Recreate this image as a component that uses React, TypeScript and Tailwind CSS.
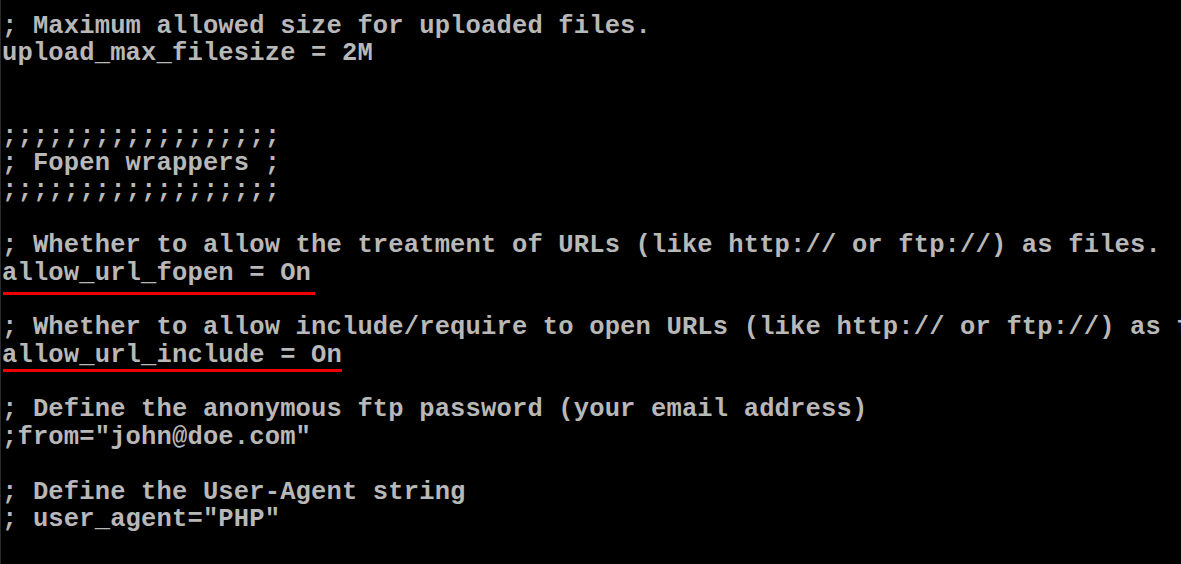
const lines = [
  '; Maximum allowed size for uploaded files.',
  'upload_max_filesize = 2M',
  '',
  '',
  ';;;;;;;;;;;;;;;;;;',
  '; Fopen wrappers ;',
  ';;;;;;;;;;;;;;;;;;',
  '',
  '; Whether to allow the treatment of URLs (like http:// or ftp://) as files.',
  'allow_url_fopen = On',
  '',
  '; Whether to allow include/require to open URLs (like http:// or ftp://) as files.',
  'allow_url_include = On',
  '',
  '; Define the anonymous ftp password (your email address)',
  ';from="john@doe.com"',
  '',
  '; Define the User-Agent string',
  '; user_agent="PHP"',
];

export default function App() {
  return (
    <div className="relative w-[1181px] h-[564px] overflow-hidden bg-black border-l border-[#2a2a2a]">
      {/* Terminal text */}
      <div className="pt-[13px] pl-[1px] font-['Liberation_Mono',monospace] text-[25.5px] leading-[27.4px] tracking-[0.15px] font-bold text-[#b8b8b8] whitespace-pre">
        {lines.map((line, i) => (
          <div key={i} className="h-[27.4px]">
            {line}
          </div>
        ))}
      </div>

      {/* Red annotations */}
      <div className="absolute left-[2px] top-[292px] w-[312px] h-[3px] bg-[#f00000]" />
      <div className="absolute left-[2px] top-[369px] w-[339px] h-[3px] bg-[#f00000]" />
    </div>
  );
}
